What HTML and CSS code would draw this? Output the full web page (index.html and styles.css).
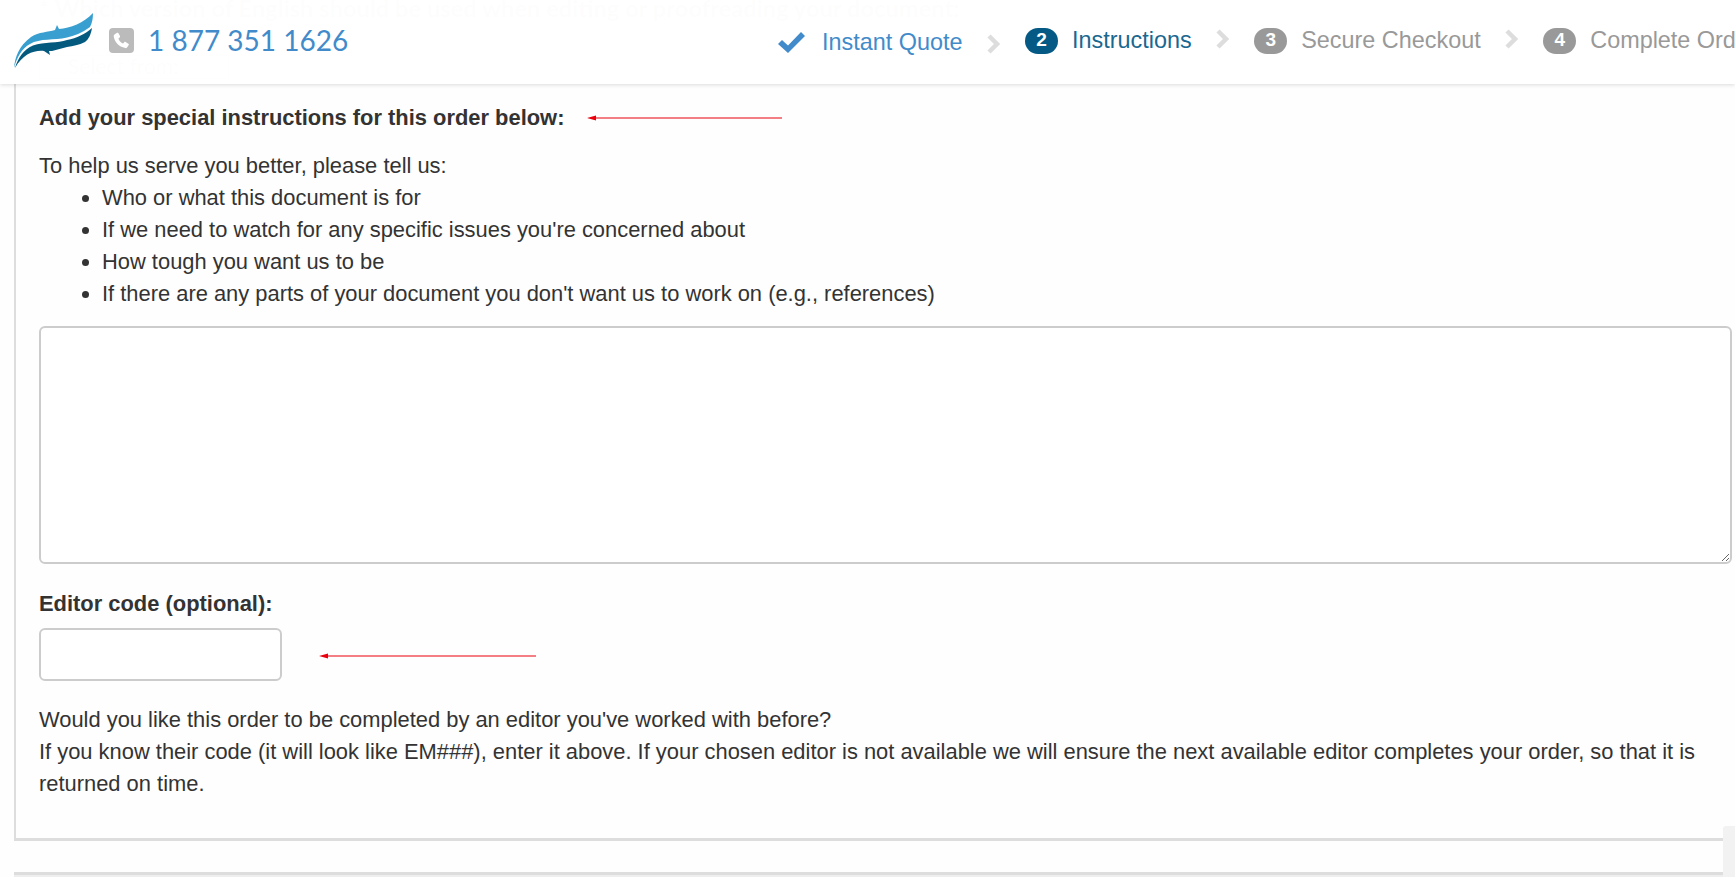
FILE: index.html
```html
<!DOCTYPE html>
<html lang="en">
<head>
<meta charset="utf-8">
<title>Instructions</title>
<link rel="stylesheet" href="styles.css">
</head>
<body>
<header class="topbar">
  <div class="brand">
    <svg class="logo" viewBox="0 0 80 56" width="80" height="56" aria-hidden="true">
      <path fill="#399fd0" d="M0 55C1 44 5 33 17 24C25 19 34 19 41 17L43 12L45 16C56 15 70 10 79 0C79 6 78 10 76 14C68 20 60 23 53 24.500C40 27.500 26 25 16 31C8 35 3 44 0 55Z"/>
      <path fill="#04597f" d="M1 55C4 45 9 37 19 32.500C30 28.500 44 30.500 53 27C63 25 71 21 78 15C77 21 75 26 71 29C65 32 59 33 53 34L38 38L35 38L36 42L30 38C20 37 9 41 1 55Z"/>
    </svg>
    <svg class="phone" viewBox="0 0 25 25" width="25" height="25" aria-hidden="true">
      <rect width="25" height="25" rx="4" fill="#bbbbbb"/>
      <path fill="#ffffff" d="M5.500 6.500 8 4.800c.5-.3 1-.2 1.300.3l1.700 3c.2.500.1 1-.3 1.300l-1.300 1c.8 2.400 2.300 4 4.700 5l1.100-1.200c.4-.4.900-.5 1.400-.2l2.800 1.800c.5.300.6.800.3 1.300l-1.700 2.400c-.4.500-1 .7-1.600.6C9.500 18.800 5.500 14 4.700 8.100c-.1-.6.300-1.200.8-1.600Z"/>
    </svg>
    <span class="phone-number">1 877 351 1626</span>
  </div>
  <nav class="steps">
    <div class="step step-done">
      <svg class="check" viewBox="0 0 27 21" width="27" height="21" aria-hidden="true"><path fill="#428bca" d="M0 12 4 8l6 5.500L23 0l4 4-17 17Z"/></svg>
      <span>Instant Quote</span>
    </div>
    <svg class="chevron chevron-low" viewBox="0 0 13 20" width="13" height="20" aria-hidden="true"><path fill="none" stroke="#dddddd" stroke-width="4.500" d="M2 2l8 8-8 8"/></svg>
    <div class="step step-current"><span class="badge">2</span><span>Instructions</span></div>
    <svg class="chevron" viewBox="0 0 13 20" width="13" height="20" aria-hidden="true"><path fill="none" stroke="#dddddd" stroke-width="4.500" d="M2 2l8 8-8 8"/></svg>
    <div class="step"><span class="badge">3</span><span>Secure Checkout</span></div>
    <svg class="chevron" viewBox="0 0 13 20" width="13" height="20" aria-hidden="true"><path fill="none" stroke="#dddddd" stroke-width="4.500" d="M2 2l8 8-8 8"/></svg>
    <div class="step"><span class="badge">4</span><span>Complete Order</span></div>
  </nav>
</header>

<div class="behind">
  <p class="behind-question">* Which version of English should be used when editing or proofreading your document:</p>
  <div class="behind-select">Select from:</div>
</div>

<main class="card">
  <div class="heading-row">
    <h2 class="heading">Add your special instructions for this order below:</h2>
    <svg class="arrow" viewBox="0 0 195 6" width="195" height="6" aria-hidden="true"><path fill="#e8000c" d="M0 3 9 .5V2.500H195V3.500H9V5.500Z"/></svg>
  </div>
  <p class="intro">To help us serve you better, please tell us:</p>
  <ul class="tips">
    <li>Who or what this document is for</li>
    <li>If we need to watch for any specific issues you're concerned about</li>
    <li>How tough you want us to be</li>
    <li>If there are any parts of your document you don't want us to work on (e.g., references)</li>
  </ul>
  <textarea class="instructions" aria-label="Special instructions"></textarea>
  <label class="heading code-label" for="editor-code">Editor code (optional):</label>
  <div class="code-row">
    <input class="code-input" id="editor-code" type="text">
    <svg class="arrow arrow-low" viewBox="0 0 217 6" width="217" height="6" aria-hidden="true"><path fill="#e8000c" d="M0 3 9 .5V2.500H217V3.500H9V5.500Z"/></svg>
  </div>
  <p class="note">Would you like this order to be completed by an editor you've worked with before?<br>If you know their code (it will look like EM###), enter it above. If your chosen editor is not available we will ensure the next available editor completes your order, so that it is returned on time.</p>
</main>

<section class="next-card"><div class="next-button"></div></section>
<div class="scroll-thumb"></div>
</body>
</html>
```
FILE: styles.css
```css
* { box-sizing: border-box; }
html, body { margin: 0; height: 877px; overflow: hidden; }
body { position: relative; width: 1735px; background: #fefefe; color: #333; font: 21.900px/32px "Liberation Sans", Arial, sans-serif; }

.topbar { position: absolute; left: 0; top: 0; width: 100%; height: 84px; display: flex; align-items: flex-start; background: rgba(255,255,255,.985); box-shadow: 0 1px 4px rgba(0,0,0,.14); white-space: nowrap; overflow: hidden; }
.brand { display: flex; align-items: center; flex: none; width: 778px; height: 84px; padding-left: 14px; }
.logo { flex: none; margin-top: -3px; }
.phone { flex: none; margin-left: 15px; margin-top: -3px; }
.phone-number { margin-left: 14px; margin-top: -4px; font: 28px/34px Lato, sans-serif; color: #428bca; }

.steps { display: flex; align-items: center; flex: none; height: 80px; color: #999; font-size: 23.400px; line-height: 30px; }
.step { display: flex; align-items: center; flex: none; }
.step-done { color: #428bca; margin-top: 4px; }
.step-current { color: #1a6890; }
.check { margin-right: 17px; }
.badge { display: block; width: 33px; height: 26px; margin-top: 2px; border-radius: 13px; margin-right: 14px; background: #999; color: #fff; font-size: 19px; font-weight: 700; line-height: 24px; text-align: center; }
.step-current .badge { background: #045a84; }
.chevron { flex: none; margin: -2px 24.800px 0; }
.chevron-low { margin-top: 7px; }

.behind { height: 84px; padding-left: 39px; overflow: hidden; color: #888; font-family: Lato, sans-serif; }
.behind-question { margin: -8px 0 0; font-size: 23.700px; font-weight: 700; line-height: 32px; }
.behind-select { width: 190px; height: 24px; margin-top: 31px; padding-left: 28px; border: 1px solid #aaa; font-size: 21px; line-height: 20px; }

.card { width: 1800px; height: 757px; margin-left: 14px; padding: 18px 0 0 23px; border-left: 2px solid #ddd; border-bottom: 3px solid #ddd; }
.heading-row { display: flex; align-items: center; gap: 23px; }
.heading { margin: 0; font-size: inherit; font-weight: 700; line-height: 32px; }
.intro { margin: 16px 0 0; }
.tips { margin: 0; padding: 0 0 0 63px; }
.instructions { display: block; width: 1693px; height: 238px; margin-top: 16px; border: 2px solid #ccc; border-radius: 6px; background: #fff; resize: both; }
.code-label { display: block; margin-top: 24px; }
.code-row { display: flex; align-items: center; gap: 37px; margin-top: 8px; }
.code-input { display: block; width: 243px; height: 53px; border: 2px solid #ccc; border-radius: 6px; background: #fff; }
.arrow-low { margin-top: 3px; }
.note { width: 1693px; margin: 23px 0 0; }

.next-card { height: 10px; margin: 31px 0 0 14px; padding-top: 4px; border-top: 3px solid #ddd; background: #eee; }
.next-button { height: 3px; margin-left: 1313px; background: #3b8dbd; }
.scroll-thumb { position: absolute; right: 0; bottom: 0; width: 12px; height: 51px; border-radius: 3px 0 0 0; background: #f2f2f2; }
```
